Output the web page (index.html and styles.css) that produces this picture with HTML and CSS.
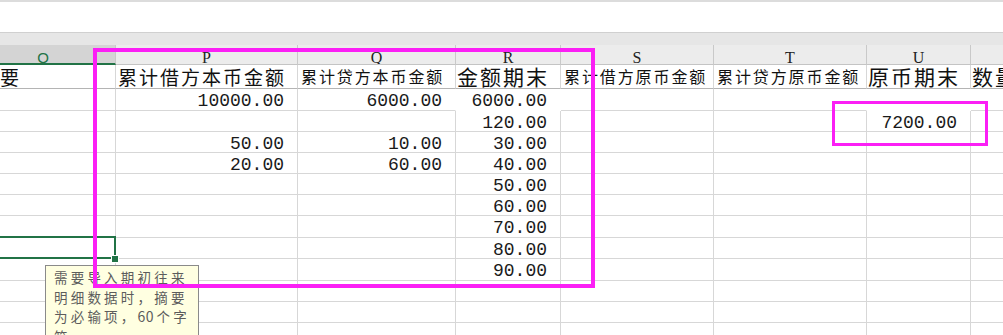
FILE: index.html
```html
<!DOCTYPE html>
<html lang="zh">
<head>
<meta charset="utf-8">
<title>Sheet</title>
<link rel="stylesheet" href="styles.css">
</head>
<body>
<div class="screen">
  <div class="top-edge"></div>
  <div class="formula-bar"></div>
  <div class="gap"></div>
  <div class="sheet">
    <div class="col-h sel">O</div>
    <div class="col-h">P</div>
    <div class="col-h">Q</div>
    <div class="col-h">R</div>
    <div class="col-h">S</div>
    <div class="col-h">T</div>
    <div class="col-h">U</div>
    <div class="col-h">V</div>

    <div class="c th f19 first">摘要</div>
    <div class="c th f19">累计借方本币金额</div>
    <div class="c th f16">累计贷方本币金额</div>
    <div class="c th f21">金额期末</div>
    <div class="c th f16">累计借方原币金额</div>
    <div class="c th f16">累计贷方原币金额</div>
    <div class="c th f21">原币期末</div>
    <div class="c th f21">数量期末</div>

    <div class="c"></div><div class="c n">10000.00</div><div class="c n nr">6000.00</div><div class="c n nr nb">6000.00</div><div class="c"></div><div class="c nr"></div><div class="c n nr nb"></div><div class="c"></div>
    <div class="c"></div><div class="c n"></div><div class="c n"></div><div class="c n">120.00</div><div class="c"></div><div class="c"></div><div class="c n">7200.00</div><div class="c"></div>
    <div class="c"></div><div class="c n">50.00</div><div class="c n">10.00</div><div class="c n">30.00</div><div class="c"></div><div class="c"></div><div class="c"></div><div class="c"></div>
    <div class="c"></div><div class="c n">20.00</div><div class="c n">60.00</div><div class="c n">40.00</div><div class="c"></div><div class="c"></div><div class="c"></div><div class="c"></div>
    <div class="c"></div><div class="c"></div><div class="c"></div><div class="c n">50.00</div><div class="c"></div><div class="c"></div><div class="c"></div><div class="c"></div>
    <div class="c"></div><div class="c"></div><div class="c"></div><div class="c n">60.00</div><div class="c"></div><div class="c"></div><div class="c"></div><div class="c"></div>
    <div class="c"></div><div class="c"></div><div class="c"></div><div class="c n">70.00</div><div class="c"></div><div class="c"></div><div class="c"></div><div class="c"></div>
    <div class="c"></div><div class="c"></div><div class="c"></div><div class="c n">80.00</div><div class="c"></div><div class="c"></div><div class="c"></div><div class="c"></div>
    <div class="c"></div><div class="c"></div><div class="c"></div><div class="c n">90.00</div><div class="c"></div><div class="c"></div><div class="c"></div><div class="c"></div>
    <div class="c"></div><div class="c"></div><div class="c"></div><div class="c"></div><div class="c"></div><div class="c"></div><div class="c"></div><div class="c"></div>
    <div class="c"></div><div class="c"></div><div class="c"></div><div class="c"></div><div class="c"></div><div class="c"></div><div class="c"></div><div class="c"></div>
    <div class="c"></div><div class="c"></div><div class="c"></div><div class="c"></div><div class="c"></div><div class="c"></div><div class="c"></div><div class="c"></div>
  </div>

  <div class="selection"><div class="handle"></div></div>
  <div class="comment">需要导入期初往来<br>明细数据时，摘要<br>为必输项，<span class="digits">60</span>个字<br>符。</div>
  <div class="mark mark-big"></div>
  <div class="mark mark-small"></div>
</div>
</body>
</html>
```

FILE: styles.css
```css
html, body {
  margin: 0;
  padding: 0;
  background: #ffffff;
}

.screen {
  position: relative;
  width: 1003px;
  height: 335px;
  overflow: hidden;
  background: #ffffff;
  font-family: "Noto Sans CJK SC", sans-serif;
}

.top-edge {
  height: 2px;
  background: #dcdcdc;
}

.formula-bar {
  height: 30px;
  background: #ffffff;
}

.gap {
  box-sizing: border-box;
  height: 13px;
  background: #e6e6e6;
  border-top: 1px solid #d0d0d0;
}

.sheet {
  display: grid;
  margin-left: -29px;
  grid-template-columns: 145px 182px 158px 105px 153px 153px 104px 100px;
  grid-template-rows: 20px 24px 22px 21px 21px 21px 21px 21px 22px 21px 22px 21px 21px 21px;
}

.col-h {
  box-sizing: border-box;
  overflow: hidden;
  background: #ececec;
  border-right: 1px solid #c9c9c9;
  border-bottom: 1px solid #c4c4c4;
  font-family: "Liberation Serif", serif;
  font-size: 16px;
  line-height: 20px;
  padding-top: 3px;
  text-align: center;
  color: #222222;
}

.col-h.sel {
  background: #d4d4d4;
  color: #217346;
  border-bottom: 2px solid #217346;
  font-family: "Liberation Sans", sans-serif;
  font-size: 15px;
}

.c {
  box-sizing: border-box;
  overflow: visible;
  white-space: nowrap;
  border-right: 1px solid #d7d7d7;
  border-bottom: 1px solid #d7d7d7;
  background: #ffffff;
  color: #000000;
}

.c.nr {
  border-right-color: #ffffff;
}

.c.nb {
  border-bottom-color: #ffffff;
}

.th {
  overflow: hidden;
  line-height: 23px;
  border-bottom-color: #b4b4b4;
  padding-left: 2px;
  color: #111111;
}

.th.first {
  padding-left: 8px;
}

.f19 {
  font-size: 19px;
  letter-spacing: 2px;
}

.f16 {
  font-size: 16px;
  letter-spacing: 1.9px;
  padding-left: 3px;
}

.f21 {
  font-size: 21px;
  letter-spacing: 2px;
  padding-left: 1px;
}

.n {
  font-family: "Liberation Mono", monospace;
  font-size: 18px;
  line-height: 21px;
  padding-top: 2px;
  padding-right: 13px;
  text-align: right;
  color: #1a1a1a;
}

.selection {
  position: absolute;
  box-sizing: border-box;
  left: -10px;
  top: 236px;
  width: 126px;
  height: 23px;
  border: 2px solid #217346;
}

.handle {
  position: absolute;
  left: 120px;
  top: 18px;
  width: 6px;
  height: 6px;
  background: #217346;
  box-shadow: 0 0 0 1px #ffffff;
}

.comment {
  position: absolute;
  box-sizing: border-box;
  left: 45px;
  top: 265px;
  width: 154px;
  height: 90px;
  background: #ffffe1;
  border: 1px solid #8a8a8a;
  padding: 2px 4px 0 8px;
  font-size: 13.5px;
  letter-spacing: 3.2px;
  line-height: 19.5px;
  color: #5c5c5c;
  white-space: nowrap;
}

.comment .digits {
  font-size: 14px;
  letter-spacing: 0.5px;
  margin-right: 2.5px;
}

.mark {
  position: absolute;
  box-sizing: border-box;
  border-style: solid;
  border-color: #fb1ff5;
}

.mark-big {
  left: 93px;
  top: 48px;
  width: 502px;
  height: 240px;
  border-width: 4px;
}

.mark-small {
  left: 832px;
  top: 101px;
  width: 156px;
  height: 45px;
  border-width: 3px;
}
```
